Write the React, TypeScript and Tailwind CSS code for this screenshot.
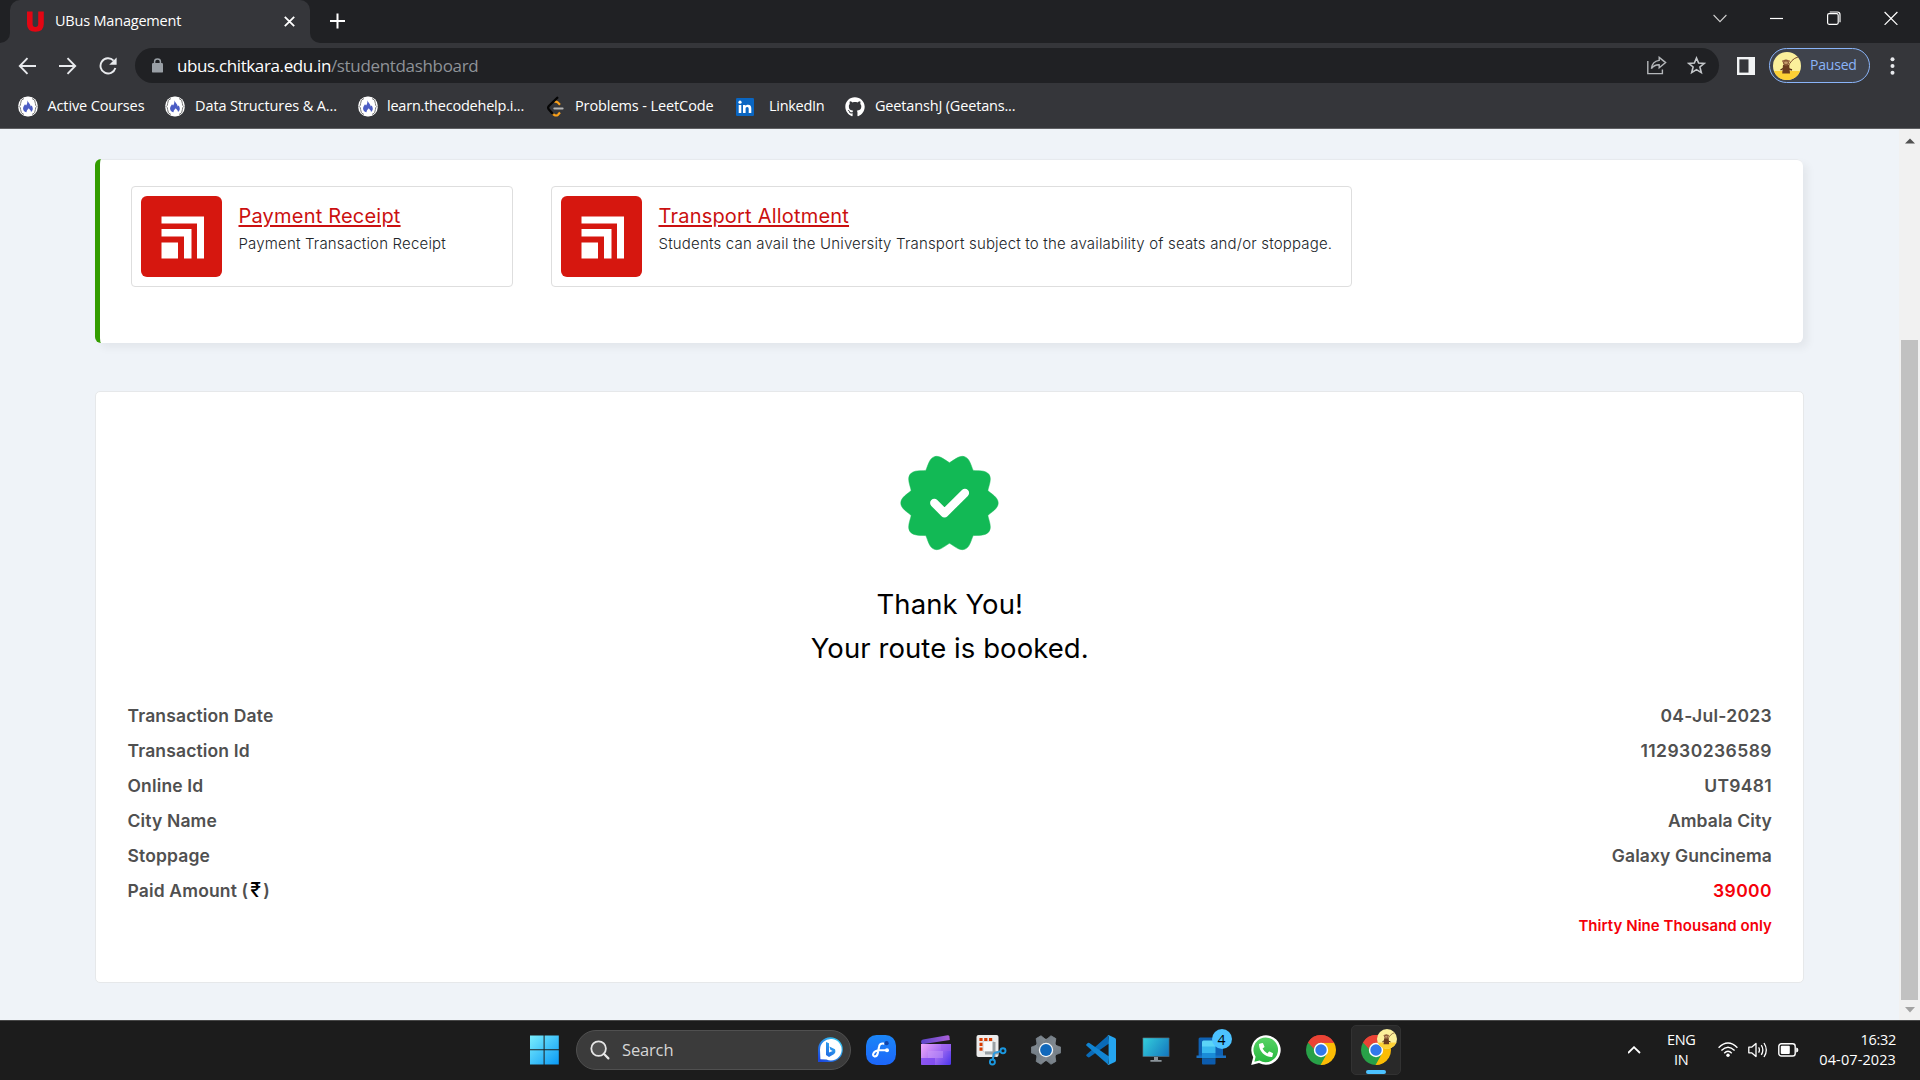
import type { ReactNode } from "react";
import { FaGithub, FaPhoneAlt } from "react-icons/fa";

const SEGOE = "font-['Open_Sans','Noto_Sans',sans-serif]";

/* ---------- Bookmark icons ---------- */

function CodeHelpIcon() {
  return (
    <svg width="20" height="21" viewBox="0 0 20 21">
      <rect x="0.3" y="0.5" width="19.4" height="20" rx="9" fill="#fff" />
      <path d="M6 2.5Q2.5 3.5 2.6 7.5Q2.6 9.8 1.2 10.5Q2.6 11.2 2.6 13.5Q2.5 17.5 6 18.5M14 2.5Q17.5 3.5 17.4 7.5Q17.4 9.8 18.8 10.5Q17.4 11.2 17.4 13.5Q17.5 17.5 14 18.5" fill="none" stroke="#777" strokeWidth="1" />
      <path d="M9.3 4.2C10 6.3 11.2 6.8 12 8.6C12.5 9.4 12.7 10 12.6 10.6L13.7 9.6C15 11.7 15.6 14.2 13 16C13 14 11.6 13.6 10.8 12.2C9.6 13.6 8.6 14.2 8.5 16.2C5.6 15.8 4.6 13.2 5.3 11.2C5.8 9.9 6.7 9 7 8.2L8.1 9.4C9.3 7.8 9.6 6 9.3 4.2Z" fill="#4b5cc4" />
    </svg>
  );
}

function LeetCodeIcon() {
  return (
    <svg width="20" height="22" viewBox="0 0 20 22" fill="none">
      <path d="M8.2 6.2Q10 5 11.6 6.3L14 8.8M6.2 17.2L8 18.8Q10.2 20.2 12 18.8L14 16.6" stroke="#f9a01b" strokeWidth="2.2" />
      <path d="M11.3 1.8L2.9 10Q1.4 11.8 2.9 13.6L6.4 17.4" stroke="#050505" strokeWidth="2.3" strokeLinecap="round" />
      <path d="M8.3 12.4H16.6" stroke="#b3b3b3" strokeWidth="2" strokeLinecap="round" />
    </svg>
  );
}

function LinkedInIcon() {
  return (
    <svg width="18" height="18" viewBox="0 0 18 18">
      <rect width="18" height="18" rx="1.2" fill="#0a66c2" />
      <path d="M2.7 7H5.3V15H2.7ZM7 7H9.5V8.1C10 7.3 10.9 6.8 12 6.8C14.6 6.8 15.3 8.4 15.3 10.8V15H12.7V11.2C12.7 10 12.5 9 11.3 9C10 9 9.6 9.9 9.6 11.2V15H7Z" fill="#fff" />
      <circle cx="4" cy="4.2" r="1.6" fill="#fff" />
    </svg>
  );
}

/* ---------- Browser chrome ---------- */

function TabStrip() {
  return (
    <div className="flex h-[43px] items-stretch bg-[#202124] text-white">
      <div className="flex w-[10px] items-end bg-[#35363a]">
        <div className="h-full w-full rounded-br-[10px] bg-[#202124]" />
      </div>
      <div className="flex w-[300px] items-center rounded-t-[10px] bg-[#35363a] pr-[15px] pb-[1px] pl-[17px]">
        <svg width="17" height="21" viewBox="0 0 17 21">
          <path d="M0 0.5H5.6V13Q5.6 16 8.4 16Q11.2 16 11.2 13V0.5H16.8V13Q16.8 20.8 8.4 20.8Q0 20.8 0 13Z" fill="#e30613" />
        </svg>
        <span className="ml-[11px] flex-1 text-[14.5px] tracking-[-0.2px]">UBus Management</span>
        <svg width="11" height="11" viewBox="0 0 11 11" stroke="#fff" strokeWidth="1.8">
          <path d="M0.8 0.8L10.2 10.2M10.2 0.8L0.8 10.2" />
        </svg>
      </div>
      <div className="w-[10px] bg-[#35363a]">
        <div className="h-full w-full rounded-bl-[10px] bg-[#202124]" />
      </div>
      <svg className="mt-[13px] ml-[10px]" width="15" height="16" viewBox="0 0 15 16" stroke="#fff" strokeWidth="2">
        <path d="M7.5 0.5V15.5M0 8H15" />
      </svg>
      <div className="ml-auto flex items-start gap-[43px] pt-[11px] pr-[22px]">
        <svg width="14" height="14" viewBox="0 0 14 14" fill="none" stroke="#d0d0d0" strokeWidth="1.1">
          <path d="M0.6 4L7 10.6L13.4 4" />
        </svg>
        <svg width="14" height="14" viewBox="0 0 14 14" stroke="#fff" strokeWidth="1.2">
          <path d="M0 7.5H13" />
        </svg>
        <svg width="14" height="14" viewBox="0 0 14 14" fill="none" stroke="#fff" strokeWidth="1.2">
          <rect x="0.6" y="2.7" width="10.6" height="10.6" rx="1.5" />
          <path d="M2.7 1H10.3Q13 1 13 3.7V11.2" />
        </svg>
        <svg width="14" height="14" viewBox="0 0 14 14" stroke="#fff" strokeWidth="1.2">
          <path d="M0.6 1L13.4 13.8M13.4 1L0.6 13.8" />
        </svg>
      </div>
    </div>
  );
}

function MonkeyAvatar() {
  return (
    <svg width="28" height="28" viewBox="0 0 28 28">
      <clipPath id="avatar">
        <circle cx="14" cy="14" r="14" />
      </clipPath>
      <g clipPath="url(#avatar)">
        <rect width="28" height="28" fill="#fbf09b" />
        <rect y="19" width="28" height="9" fill="#fdd035" />
        <path d="M15 15Q18 7 25 5" fill="none" stroke="#7b4a2e" strokeWidth="1" />
        <path d="M7.5 18L12 15.5L19 18" fill="none" stroke="#5a3018" strokeWidth="1.4" />
        <path d="M10 13H16.2L17 21.5H9.2Z" fill="#6b3c20" />
        <circle cx="13" cy="10.6" r="3.1" fill="#8a5a38" />
        <circle cx="10.2" cy="9.2" r="1.1" fill="#a06e48" />
        <circle cx="15.8" cy="9.2" r="1.1" fill="#a06e48" />
        <ellipse cx="13" cy="10.8" rx="1.9" ry="1.3" fill="#c59c6c" />
      </g>
    </svg>
  );
}

function Toolbar() {
  return (
    <div className="flex h-[45px] items-center bg-[#35363a]">
      <div className="flex w-[135px] items-center gap-[21px] pl-[18px]">
        <svg width="19" height="18" viewBox="0 0 19 18" fill="none" stroke="#e8eaed" strokeWidth="1.9">
          <path d="M18 9H2M9.5 1.2L1.8 9L9.5 16.8" />
        </svg>
        <svg width="19" height="18" viewBox="0 0 19 18" fill="none" stroke="#e8eaed" strokeWidth="1.9">
          <path d="M1 9H17M9.5 1.2L17.2 9L9.5 16.8" />
        </svg>
        <svg className="ml-[1px]" width="18" height="18" viewBox="0 0 18 18" fill="none" stroke="#e8eaed" strokeWidth="1.9">
          <path d="M14.6 3.6A7.6 7.6 0 1 0 16.4 11" />
          <path d="M17.6 0.4V7.8H10.2Z" fill="#e8eaed" stroke="none" />
        </svg>
      </div>
      <div className="flex h-[35px] w-[1584px] items-center rounded-full bg-[#202124] pr-[13px] pl-[17px]">
        <svg width="11" height="15" viewBox="0 0 11 15">
          <rect y="5" width="11" height="9.6" rx="1.2" fill="#9aa0a6" />
          <path d="M2.6 6V3.6Q2.6 1 5.5 1Q8.4 1 8.4 3.6V6" fill="none" stroke="#9aa0a6" strokeWidth="1.5" />
        </svg>
        <span className="ml-[14px] text-[17px] tracking-[-0.38px] text-white">ubus.chitkara.edu.in</span>
        <span className="flex-1 text-[17px] tracking-[-0.33px] text-[#8f9398]">/studentdashboard</span>
        <svg width="20" height="19" viewBox="0 0 20 19" fill="none" stroke="#b4b7ba" strokeWidth="1.4">
          <path d="M0.8 5V17.6H15.4V13.6" />
          <path d="M12.2 1.4L18.6 6.6L12.2 11.8V8.8Q7.2 8.6 4.4 12.6Q5.2 5.4 12.2 4.4Z" />
        </svg>
        <svg className="ml-[20px]" width="19" height="19" viewBox="0 0 19 19" fill="none" stroke="#c4c7ca" strokeWidth="1.6">
          <path d="M9.5 2L11.6 7L17.2 7.4L12.9 11L14.3 16.6L9.5 13.6L4.7 16.6L6.1 11L1.8 7.4L7.4 7Z" />
        </svg>
      </div>
      <svg className="ml-[18px]" width="18" height="18" viewBox="0 0 18 18">
        <rect x="1.2" y="1.2" width="15.6" height="15.6" fill="none" stroke="#f1f3f4" strokeWidth="2.4" />
        <rect x="11.5" y="1" width="6" height="16" fill="#f1f3f4" />
      </svg>
      <div className="ml-[14px] flex h-[35px] w-[101px] items-center rounded-full border border-[#8ab4f8] bg-[#3f434c] pl-[3px]">
        <MonkeyAvatar />
        <span className="ml-[9px] pb-[2px] text-[14px] tracking-[-0.2px] text-[#8ab4f8]">Paused</span>
      </div>
      <svg className="ml-[20px]" width="5" height="18" viewBox="0 0 5 18" fill="#e8eaed">
        <circle cx="2.5" cy="2.3" r="2" />
        <circle cx="2.5" cy="9" r="2" />
        <circle cx="2.5" cy="15.7" r="2" />
      </svg>
    </div>
  );
}

function BookmarksBar() {
  return (
    <div className="flex h-[41px] items-center border-b border-[#5f6063] bg-[#35363a] pb-[3px] pl-[18px] text-[14.5px] whitespace-nowrap text-white [&_span]:pb-[2px]">
      <div className="flex w-[147px] items-center gap-[9.5px] tracking-[-0.13px]">
        <CodeHelpIcon />
        <span>Active Courses</span>
      </div>
      <div className="flex w-[193px] items-center gap-[10px] tracking-[-0.1px]">
        <CodeHelpIcon />
        <span>Data Structures &amp; A...</span>
      </div>
      <div className="flex w-[188px] items-center gap-[9px] tracking-[-0.22px]">
        <CodeHelpIcon />
        <span>learn.thecodehelp.i...</span>
      </div>
      <div className="flex w-[190px] items-center gap-[9px] tracking-[-0.1px]">
        <LeetCodeIcon />
        <span>Problems - LeetCode</span>
      </div>
      <div className="flex w-[109px] items-center gap-[15px] tracking-[-0.3px]">
        <LinkedInIcon />
        <span>LinkedIn</span>
      </div>
      <div className="flex items-center gap-[10px] tracking-[-0.17px]">
        <FaGithub size={20} color="#fff" />
        <span>GeetanshJ (Geetans...</span>
      </div>
    </div>
  );
}

/* ---------- Page ---------- */

function ServiceCard({ title, text, size }: { title: string; text: string; size: string }) {
  return (
    <div className={`flex h-[101px] rounded-[4px] border border-[#dedede] p-[9px] ${size}`}>
      <svg width="81" height="81" viewBox="0 0 81 81">
        <rect width="81" height="81" rx="6" fill="#d6170f" />
        <g fill="#fff">
          <path d="M20.5 20.5H63V62.5H56V27.5H20.5Z" />
          <path d="M20.5 33H50.5V62.5H43V40.5H20.5Z" />
          <rect x="20.5" y="46.5" width="16.5" height="16" />
        </g>
      </svg>
      <div className="ml-[16.5px] flex flex-col pt-[6px]">
        <a className="text-[20px] leading-[28px] tracking-[0.2px] text-[#cb1010] underline decoration-2 underline-offset-[1.5px]">{title}</a>
        <p className="text-[15px] leading-[28px] font-light tracking-[0.18px] whitespace-nowrap text-[#212529]">{text}</p>
      </div>
    </div>
  );
}

function SuccessBadge() {
  const at = (radius: number, deg: number) => {
    const a = (deg * Math.PI) / 180;
    return `${(radius * Math.cos(a)).toFixed(2)} ${(radius * Math.sin(a)).toFixed(2)}`;
  };
  const lobes = Array.from({ length: 10 }, (_, i) => {
    const d = i * 36;
    return `C${at(42.6, d - 12.6)} ${at(49.1, d - 6.6)} ${at(48.7, d)}C${at(49.1, d + 6.6)} ${at(42.6, d + 12.6)} ${at(40.3, d + 18)}`;
  });
  return (
    <svg width="100" height="96" viewBox="-49.5 -48 100 96">
      <path d={`M${at(40.3, -18)}${lobes.join("")}Z`} fill="#12b955" stroke="#12b955" strokeWidth="0.5" strokeLinejoin="round" />
      <path d="M-15.2 0L-5 10.2L15.4 -10" fill="none" stroke="#fff" strokeWidth="8.4" strokeLinecap="round" strokeLinejoin="round" />
    </svg>
  );
}

const details: { label: ReactNode; value: string; tone: string }[] = [
  { label: "Transaction Date", value: "04-Jul-2023", tone: "tracking-[0.3px]" },
  { label: "Transaction Id", value: "112930236589", tone: "tracking-[0.45px]" },
  { label: "Online Id", value: "UT9481", tone: "tracking-[0.3px]" },
  { label: "City Name", value: "Ambala City", tone: "tracking-[0.1px]" },
  { label: "Stoppage", value: "Galaxy Guncinema", tone: "tracking-[0.1px]" },
  {
    label: (
      <>
        Paid Amount (<span className="px-[2px] text-[19.5px] leading-none font-medium text-black">₹</span>)
      </>
    ),
    value: "39000",
    tone: "tracking-[0.4px] text-[#f5000a]",
  },
];

function Page() {
  return (
    <main className="flex h-[891px] bg-[#eff3f8] font-['Inter',sans-serif]">
      <div className="flex-1 pt-[30px] pl-[95px]">
        <section className="flex h-[184px] w-[1708px] gap-[38px] rounded-[6px] border-l-[5px] border-[#339d00] bg-white pt-[27px] pl-[31px] shadow-[inset_0_1px_0_#e7eaee,5px_5px_8px_rgba(0,0,0,0.05)]">
          <ServiceCard title="Payment Receipt" text="Payment Transaction Receipt" size="w-[382px]" />
          <ServiceCard
            title="Transport Allotment"
            text="Students can avail the University Transport subject to the availability of seats and/or stoppage."
            size="w-[801px]"
          />
        </section>
        <section className="mt-[48px] flex h-[592px] w-[1709px] flex-col rounded-[5px] border border-[#e6e8ea] bg-white pt-[63px] pr-[31px] pl-[31.5px]">
          <div className="flex justify-center">
            <SuccessBadge />
          </div>
          <h1 className="mt-[31px] text-center text-[27.5px] leading-[44px] tracking-[0.07px] text-black">
            Thank You!
            <br />
            Your route is booked.
          </h1>
          <dl className="mt-[28px] text-[17.5px] leading-[35px] font-semibold text-[#505050]">
            {details.map((d) => (
              <div key={d.value} className="flex h-[35px] justify-between">
                <dt className="tracking-[0.15px]">{d.label}</dt>
                <dd className={d.tone}>{d.value}</dd>
              </div>
            ))}
          </dl>
          <p className="text-right text-[15px] leading-[35px] font-semibold tracking-[0.05px] text-[#f5000a]">Thirty Nine Thousand only</p>
        </section>
      </div>
      <div className="flex w-[21px] flex-col items-center bg-[#f1f1f1]">
        <svg className="mt-[9px]" width="10" height="6" viewBox="0 0 10 6">
          <path d="M0 5.5L5 0.5L10 5.5Z" fill="#505050" />
        </svg>
        <div className="mt-[196px] h-[660px] w-[17px] bg-[#c1c1c1]" />
        <svg className="mt-[7px]" width="10" height="6" viewBox="0 0 10 6">
          <path d="M0 0L5 5.5L10 0Z" fill="#a3a3a3" />
        </svg>
      </div>
    </main>
  );
}

/* ---------- Taskbar ---------- */

function ChromeLogo() {
  return (
    <svg width="30" height="30" viewBox="-15 -15 30 30">
      <path d="M0 0L-12.99 -7.5A15 15 0 0 1 12.99 -7.5Z" fill="#ea4335" />
      <path d="M0 0L12.99 -7.5A15 15 0 0 1 0 15Z" fill="#fbbc05" />
      <path d="M0 0L0 15A15 15 0 0 1 -12.99 -7.5Z" fill="#28a148" />
      <path d="M0 -7.2H13.1L12 0H0Z" fill="#fbbc05" />
      <path d="M-12.99 -7.5L-6.2 3.6L0 0L0 -7.2H-9Z" fill="#28a148" />
      <path d="M-12.99 -7.5A15 15 0 0 1 12.99 -7.3H0A7 7 0 0 0 -7 -1Z" fill="#ea4335" />
      <path d="M6.2 3.6L0 15L-6.2 3.6Z" fill="#28a148" />
      <path d="M6.2 3.6L-0.4 15A15 15 0 0 0 8 12.5Z" fill="#fbbc05" />
      <circle r="7.2" fill="#fff" />
      <circle r="5.7" fill="#3278ea" />
    </svg>
  );
}

function WindowsLogo() {
  return (
    <svg width="30" height="30" viewBox="0 0 30 30" fill="url(#win)">
      <linearGradient id="win" x1="0" y1="0" x2="30" y2="30" gradientUnits="userSpaceOnUse">
        <stop stopColor="#7df0fd" />
        <stop offset="1" stopColor="#0898f5" />
      </linearGradient>
      <path d="M1 0.5H14.6V14.2H1ZM15.6 0.5H29.8V14.2H15.6ZM1 15.2H14.6V29.5H1ZM15.6 15.2H29.8V29.5H15.6Z" />
    </svg>
  );
}

function BingIcon() {
  return (
    <svg width="26" height="26" viewBox="0 0 26 26">
      <linearGradient id="bing" x1="4" y1="24" x2="22" y2="4" gradientUnits="userSpaceOnUse">
        <stop stopColor="#1b48dd" />
        <stop offset="1" stopColor="#35c3f2" />
      </linearGradient>
      <path d="M1 25V13A12.4 12.4 0 1 1 13 25Z" fill="url(#bing)" />
      <path d="M3.4 22.2L3 13A10.8 10.8 0 1 1 9.5 22.6Z" fill="#fff" />
      <path d="M9 5L12 6.2V15.6L15.7 13.9L13.4 12.7L12.4 9.6L18 12.2Q19.2 15.5 16.8 17.2L12 20L9 18Z" fill="url(#bing)" />
    </svg>
  );
}

function FreeformIcon() {
  return (
    <svg width="30" height="30" viewBox="0 0 30 30">
      <linearGradient id="ff" x1="0" y1="0" x2="0" y2="30" gradientUnits="userSpaceOnUse">
        <stop stopColor="#1b86f7" />
        <stop offset="1" stopColor="#1c66fa" />
      </linearGradient>
      <rect width="30" height="30" rx="10.5" fill="url(#ff)" />
      <path d="M17.5 8.6Q13.6 8 13 12L11.8 18Q11 21.8 8.4 21.4Q6.4 20.6 7.4 18.4Q9 15.4 13.5 15.3H21" fill="none" stroke="#fff" strokeWidth="2.1" strokeLinecap="round" />
      <circle cx="20.6" cy="8.2" r="2.1" fill="#1243a8" />
      <circle cx="21" cy="15.2" r="2" fill="#fff" />
    </svg>
  );
}

function ClipchampIcon() {
  return (
    <svg width="30" height="30" viewBox="0 0 30 30">
      <linearGradient id="clip" x1="0" y1="2" x2="28" y2="2" gradientUnits="userSpaceOnUse">
        <stop stopColor="#5a45c9" />
        <stop offset="1" stopColor="#a85fd8" />
      </linearGradient>
      <linearGradient id="clipBody" x1="0" y1="9" x2="30" y2="30" gradientUnits="userSpaceOnUse">
        <stop stopColor="#f0a8fa" />
        <stop offset="0.55" stopColor="#a06bf2" />
        <stop offset="1" stopColor="#4a34ea" />
      </linearGradient>
      <path d="M0 7Q0 5 2 4.6L26.5 0.2Q28 0 28.4 1.5L28.8 5L1 9.2Z" fill="url(#clip)" />
      <path d="M0 9H30V28.5Q30 30 28.5 30H1.5Q0 30 0 28.5Z" fill="url(#clipBody)" />
      <path d="M7 16H22V23H7Z" fill="#c99bfa" opacity="0.45" />
      <path d="M20 9H30V16H20Z" fill="#9b5fee" opacity="0.5" />
      <path d="M0 23H14V30H1.5Q0 30 0 28.5Z" fill="#7a45ee" opacity="0.75" />
    </svg>
  );
}

function SnipIcon() {
  return (
    <svg width="32" height="32" viewBox="0 0 32 32" fill="none">
      <rect x="1.5" y="1" width="22" height="22" rx="2" fill="#ececec" />
      <rect x="8" y="7" width="11" height="11" rx="1.5" fill="#fafafa" stroke="#c9ccce" />
      <path d="M4.4 5.4H17.5" stroke="#d83b01" strokeWidth="3" strokeDasharray="3.2 1.6" />
      <path d="M6 8.8V18.4" stroke="#d83b01" strokeWidth="3" strokeDasharray="3.2 1.6" />
      <path d="M19 8V23M10 19H23.5" stroke="#9aa0a4" strokeWidth="3" />
      <path d="M19 19L25.2 17.4M19 19L17.8 25.5" stroke="#2f9be0" strokeWidth="2" />
      <circle cx="28" cy="16.8" r="2.5" stroke="#1b98e0" strokeWidth="1.9" />
      <circle cx="17.4" cy="28" r="2.5" stroke="#1b98e0" strokeWidth="1.9" />
    </svg>
  );
}

function GearIcon() {
  return (
    <svg width="30" height="30" viewBox="-15 -15 30 30">
      <linearGradient id="gear" x1="0" y1="-15" x2="0" y2="15" gradientUnits="userSpaceOnUse">
        <stop stopColor="#8d959c" />
        <stop offset="1" stopColor="#67717a" />
      </linearGradient>
      <g fill="url(#gear)">
        <circle r="11.3" />
        {[0, 60, 120].map((deg) => (
          <path key={deg} d="M-14.8 -2.8L-9 -5H9L14.8 -2.8V2.8L9 5H-9L-14.8 2.8Z" transform={`rotate(${deg})`} stroke="url(#gear)" strokeWidth="0.8" strokeLinejoin="round" />
        ))}
      </g>
      <circle r="7.2" fill="#f4f6f7" />
      <circle r="5.9" fill="#1068bb" />
    </svg>
  );
}

function VsCodeIcon() {
  return (
    <svg width="30" height="30" viewBox="0 0 30 30">
      <path d="M22 0.4L23 8.6L3.4 22.2Q2.6 22.8 1.8 22.1L0.5 20.9Q-0.2 20.1 0.6 19.4Z" fill="#0a6bb8" />
      <path d="M22 29.6L23 21.4L3.4 8Q2.6 7.4 1.8 8.1L0.5 9.3Q-0.2 10.1 0.6 10.8Z" fill="#1184d2" />
      <path d="M21.5 0.3Q22.2 -0.1 23 0.3L29 3.1Q30 3.6 30 4.7V25.3Q30 26.4 29 26.9L23 29.7Q22.2 30.1 21.5 29.7Q22.6 29.6 22.6 28V2Q22.6 0.4 21.5 0.3Z" fill="#25a5f0" />
    </svg>
  );
}

function MonitorIcon() {
  return (
    <svg width="28" height="26" viewBox="0 0 28 26">
      <linearGradient id="mon" x1="0" y1="0" x2="28" y2="20" gradientUnits="userSpaceOnUse">
        <stop stopColor="#35d3dd" />
        <stop offset="1" stopColor="#1272bd" />
      </linearGradient>
      <rect x="0.5" y="0.5" width="27" height="19.6" rx="0.8" fill="#4d5a63" />
      <rect x="1.2" y="1.2" width="25.6" height="18" fill="url(#mon)" />
      <path d="M12 20H16V23H19.6V24.8H8.4V23H12Z" fill="#8b949a" />
    </svg>
  );
}

function PhoneLinkIcon() {
  return (
    <div className="relative">
      <svg width="32" height="30" viewBox="0 0 32 30">
        <path d="M3.6 4Q3.6 2.5 5 2.5H28V21H3.6Z" fill="#0f62b4" />
        <path d="M1.5 20.5H31V23H1.5Z" fill="#1a70c2" />
        <path d="M7 7Q7 5.5 8.5 5.5H19Q20.5 5.5 20.5 7V12H7Z" fill="#5cd5f7" />
        <path d="M7 11.5H20.5V18H7Z" fill="#38b8ee" />
        <path d="M7 18H20.5V23.5H7Z" fill="#1a8cd8" />
        <path d="M7 23.5H20.5V28.5Q20.5 29.5 19.5 29.5H8Q7 29.5 7 28.5Z" fill="#0c5cae" />
      </svg>
      <span className="absolute -top-[6px] left-[17px] flex h-[20px] w-[20px] items-center justify-center rounded-full bg-[#4cc2ff] text-[14px] text-black">4</span>
    </div>
  );
}

function WhatsAppIcon() {
  return (
    <div className="relative h-[30px] w-[30px]">
      <svg width="30" height="30" viewBox="0 0 30 30">
        <linearGradient id="wa" x1="0" y1="0" x2="0" y2="30" gradientUnits="userSpaceOnUse">
          <stop stopColor="#5cd669" />
          <stop offset="1" stopColor="#22b43a" />
        </linearGradient>
        <path d="M0.2 30L2.2 22.2A14.7 14.7 0 1 1 8 27.9Z" fill="#fff" />
        <path d="M3.4 26.7L4.6 21.8A12.3 12.3 0 1 1 8.6 25.5Z" fill="url(#wa)" />
      </svg>
      <FaPhoneAlt className="absolute top-[8px] left-[8px] -scale-y-100 -rotate-90" size={14} color="#fff" />
    </div>
  );
}

function Slot({ children }: { children: ReactNode }) {
  return <div className="flex h-[50px] w-[55px] items-center justify-center">{children}</div>;
}

function Taskbar() {
  return (
    <div className="flex h-[60px] border-t border-[#474747] bg-[#1c1c1c] text-white">
      <div className="flex items-center pb-[1px] pl-[529px]">
        <WindowsLogo />
        <div className="ml-[17px] flex h-[40px] w-[275px] items-center rounded-full border border-[#505050] bg-[#3b3b3b] pr-[7px] pl-[13px]">
          <svg width="20" height="20" viewBox="0 0 20 20" fill="none" stroke="#e6e6e6" strokeWidth="1.8">
            <circle cx="8.6" cy="8.6" r="7.3" fill="#505050" />
            <path d="M13.8 13.8L18.4 18.4" strokeWidth="2.2" strokeLinecap="round" />
          </svg>
          <span className="ml-[12px] flex-1 pt-[1px] text-[16.5px] tracking-[-0.15px] text-[#d6d6d6]">Search</span>
          <BingIcon />
        </div>
        <div className="ml-[2px] flex items-center">
          <Slot><FreeformIcon /></Slot>
          <Slot><ClipchampIcon /></Slot>
          <Slot><SnipIcon /></Slot>
          <Slot><GearIcon /></Slot>
          <Slot><VsCodeIcon /></Slot>
          <Slot><MonitorIcon /></Slot>
          <Slot><PhoneLinkIcon /></Slot>
          <Slot><WhatsAppIcon /></Slot>
          <Slot><ChromeLogo /></Slot>
          <Slot>
            <div className="relative flex h-[50px] w-[50px] items-center justify-center rounded-[5px] border border-[#323232] bg-[#292929]">
              <ChromeLogo />
              <div className="absolute top-[3px] right-[3px] h-[20px] w-[20px] [&>svg]:h-[20px] [&>svg]:w-[20px]">
                <MonkeyAvatar />
              </div>
              <div className="absolute bottom-0 left-[14px] h-[4px] w-[20px] rounded-full bg-[#4cc2ff]" />
            </div>
          </Slot>
        </div>
      </div>
      <div className="ml-auto flex items-center pr-[24px] pb-[1px] text-[14.5px] leading-[20px]">
        <svg width="14" height="8" viewBox="0 0 14 8" fill="none" stroke="#fff" strokeWidth="1.8">
          <path d="M0 7L6 1.2L12 7" />
        </svg>
        <div className="ml-[25px] text-center tracking-[-0.4px]">
          ENG
          <br />
          IN
        </div>
        <svg className="ml-[23px]" width="20" height="16" viewBox="0 0 20 16" fill="none" stroke="#fff" strokeWidth="1.4">
          <path d="M0.6 5.8Q10 -3.6 19.4 5.8M3.4 8.6Q10 2 16.6 8.6M6.2 11.2Q10 7.4 13.8 11.2" />
          <circle cx="10" cy="13.2" r="1.7" fill="#fff" stroke="none" />
        </svg>
        <svg className="ml-[10px]" width="20" height="18" viewBox="0 0 20 18" fill="none" stroke="#fff" strokeWidth="1.3">
          <path d="M0.8 6.2H3.6L8 2.4V15.6L3.6 11.8H0.8Z" strokeLinejoin="round" />
          <path d="M10.6 6.4Q12.3 9 10.6 11.6M13.3 4.2Q16.4 9 13.3 13.8M16 2Q20.6 9 16 16" />
        </svg>
        <svg className="ml-[10px]" width="21" height="14" viewBox="0 0 21 14">
          <rect x="0.8" y="0.8" width="16.4" height="12.2" rx="2.6" fill="none" stroke="#fff" strokeWidth="1.4" />
          <rect x="2.8" y="2.8" width="9" height="8.2" rx="1" fill="#fff" />
          <path d="M18.2 4.4Q20.4 4.6 20.4 6.9Q20.4 9.2 18.2 9.4Z" fill="#fff" />
        </svg>
        <div className="ml-[20px] text-right">
          <span className="tracking-[-0.3px]">16:32</span>
          <br />
          <span className="tracking-[0.1px]">04-07-2023</span>
        </div>
      </div>
    </div>
  );
}

export default function App() {
  return (
    <div className={`flex h-[1080px] w-[1920px] flex-col overflow-hidden ${SEGOE}`}>
      <TabStrip />
      <Toolbar />
      <BookmarksBar />
      <Page />
      <Taskbar />
    </div>
  );
}
